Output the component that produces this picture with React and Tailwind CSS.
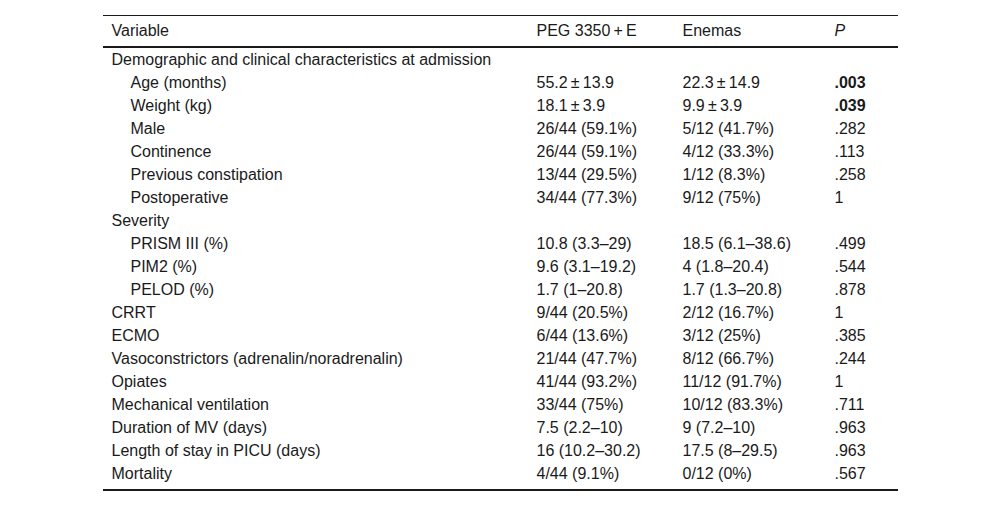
import React from 'react';

const rows = [
  { label: 'Demographic and clinical characteristics at admission', section: true },
  { label: 'Age (months)', indent: true, a: '55.2\u2009±\u200913.9', b: '22.3\u2009±\u200914.9', p: '.003', bold: true },
  { label: 'Weight (kg)', indent: true, a: '18.1\u2009±\u20093.9', b: '9.9\u2009±\u20093.9', p: '.039', bold: true },
  { label: 'Male', indent: true, a: '26/44 (59.1%)', b: '5/12 (41.7%)', p: '.282' },
  { label: 'Continence', indent: true, a: '26/44 (59.1%)', b: '4/12 (33.3%)', p: '.113' },
  { label: 'Previous constipation', indent: true, a: '13/44 (29.5%)', b: '1/12 (8.3%)', p: '.258' },
  { label: 'Postoperative', indent: true, a: '34/44 (77.3%)', b: '9/12 (75%)', p: '1' },
  { label: 'Severity', section: true },
  { label: 'PRISM III (%)', indent: true, a: '10.8 (3.3–29)', b: '18.5 (6.1–38.6)', p: '.499' },
  { label: 'PIM2 (%)', indent: true, a: '9.6 (3.1–19.2)', b: '4 (1.8–20.4)', p: '.544' },
  { label: 'PELOD (%)', indent: true, a: '1.7 (1–20.8)', b: '1.7 (1.3–20.8)', p: '.878' },
  { label: 'CRRT', a: '9/44 (20.5%)', b: '2/12 (16.7%)', p: '1' },
  { label: 'ECMO', a: '6/44 (13.6%)', b: '3/12 (25%)', p: '.385' },
  { label: 'Vasoconstrictors (adrenalin/noradrenalin)', a: '21/44 (47.7%)', b: '8/12 (66.7%)', p: '.244' },
  { label: 'Opiates', a: '41/44 (93.2%)', b: '11/12 (91.7%)', p: '1' },
  { label: 'Mechanical ventilation', a: '33/44 (75%)', b: '10/12 (83.3%)', p: '.711' },
  { label: 'Duration of MV (days)', a: '7.5 (2.2–10)', b: '9 (7.2–10)', p: '.963' },
  { label: 'Length of stay in PICU (days)', a: '16 (10.2–30.2)', b: '17.5 (8–29.5)', p: '.963' },
  { label: 'Mortality', a: '4/44 (9.1%)', b: '0/12 (0%)', p: '.567' },
];

export default function App() {
  return (
    <div className="w-[1000px] h-[507px] bg-white pt-[15px] font-['Liberation_Sans',Arial,sans-serif] text-[16px] leading-[23px] text-[#1a1a1a]">
      <table className="w-[795px] mx-auto border-collapse text-left">
        <colgroup>
          <col className="w-[425px]" />
          <col className="w-[146px]" />
          <col className="w-[152px]" />
          <col className="w-[72px]" />
        </colgroup>
        <thead>
          <tr className="h-[31px] border-t border-b-2 border-[#1a1a1a]">
            <th className="font-normal p-0 pl-[9px] align-middle">Variable</th>
            <th className="font-normal p-0 pl-[9px]">PEG 3350{'\u2009+\u2009'}E</th>
            <th className="font-normal p-0 pl-[9px]">Enemas</th>
            <th className="font-normal italic p-0 pl-[9px]">P</th>
          </tr>
        </thead>
        <tbody className="border-b-2 border-[#1a1a1a]">
          {rows.map((r, i) => {
            const last = i === rows.length - 1;
            return (
              <tr key={i} className={last ? 'h-[28px] align-top' : 'h-[23px] align-middle'}>
                <td className={(r.indent ? 'pl-[28px]' : 'pl-[9px]') + ' p-0 whitespace-nowrap'}>{r.label}</td>
                <td className="p-0 pl-[9px] whitespace-nowrap">{r.a || ''}</td>
                <td className="p-0 pl-[9px] whitespace-nowrap">{r.b || ''}</td>
                <td className={'p-0 pl-[9px]' + (r.bold ? ' font-bold' : '')}>{r.p || ''}</td>
              </tr>
            );
          })}
        </tbody>
      </table>
    </div>
  );
}
